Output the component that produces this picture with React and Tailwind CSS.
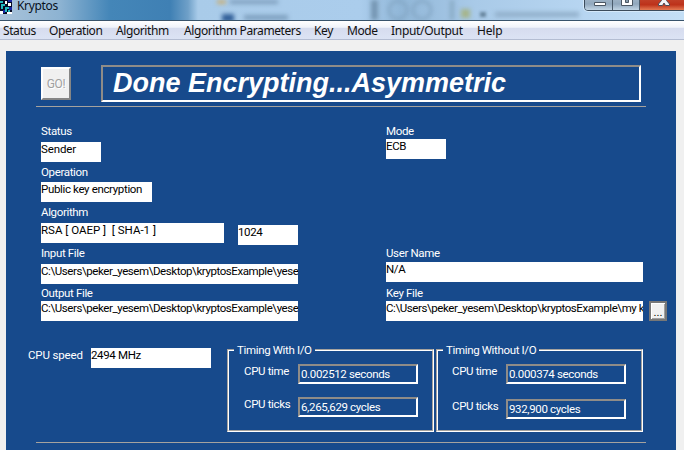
const sunken = "border-2 border-t-[#8f8c88] border-l-[#8f8c88] border-b-white border-r-white";

function Label({ children, className = "" }) {
  return <div className={`h-[14px] whitespace-nowrap leading-[14px] text-white ${className}`}>{children}</div>;
}

function Field({ children, className = "" }) {
  return (
    <div className={`h-5 overflow-hidden whitespace-nowrap bg-white leading-[15px] text-black ${className}`}>
      {children}
    </div>
  );
}

function Timing({ title, time, ticks, titleClass, labelClass, rowClass }) {
  return (
    <div className="flex h-[83px] w-[207px] flex-col border border-white border-t-[#a5a29e] border-l-[#a5a29e]">
      <div className="flex h-[81px] flex-col border border-t-white border-l-white border-b-[#a5a29e] border-r-[#a5a29e]">
        <div className={`-mt-2 h-[14px] self-start whitespace-nowrap bg-[#174a8c] px-[3px] leading-[14px] text-white ${titleClass}`}>{title}</div>
        <div className="mt-[7px] flex pr-[14px]">
          <Label className={`w-[54px] ${labelClass}`}>CPU time</Label>
          <div className={`h-5 w-[120px] whitespace-nowrap pl-px leading-[17px] text-white ${sunken}`}>{time}</div>
        </div>
        <div className={`flex ${rowClass}`}>
          <Label className={`w-[54px] ${labelClass}`}>CPU ticks</Label>
          <div className={`h-5 w-[120px] whitespace-nowrap pl-px leading-[17px] text-white ${sunken}`}>{ticks}</div>
        </div>
      </div>
    </div>
  );
}

function TitleBar() {
  return (
    <header className="relative flex h-[21px] overflow-hidden border-b border-[#38536b] bg-[linear-gradient(90deg,#a9c3da_0px,#8db3d2_60px,#4486b8_110px,#3f80b4_170px,#6fa0c8_188px,#a9cbe9_198px,#abcdec_360px,#91b7d8_400px,#a9cae8_475px,#b9d7f2_600px,#c4dff6_684px)]">
      <div className="absolute left-[230px] top-0 h-1 w-[48px] bg-[#7f9fbd] blur-[2px]" />
      <div className="absolute left-[217px] top-0 h-1 w-[9px] bg-[#c9b078] blur-[2px]" />
      <div className="absolute left-[222px] top-[14px] h-2 w-3 bg-[#315f98] blur-[2px]" />
      <div className="absolute left-[244px] top-[15px] h-[5px] w-11 bg-[#7d9fbe] blur-[2px]" />
      <div className="absolute left-[371px] top-0 h-5 w-[7px] bg-[#7596b2] blur-[2px]" />
      <div className="absolute left-[388px] top-0 size-5 rounded-full border-2 border-[#7d9fbc] blur-[2px]" />
      <div className="absolute left-[412px] top-0 size-5 rounded-full border-2 border-[#7d9fbc] blur-[2px]" />
      <div className="absolute left-[450px] top-0 h-5 w-1 bg-[#88a9c4] blur-[2px]" />
      <div className="absolute left-[461px] top-[9px] h-[9px] w-[9px] bg-[#a6b58c] blur-[2px]" />
      <div className="absolute left-[480px] top-[12px] h-[5px] w-[6px] bg-[#68869f] blur-[1.5px]" />
      <div className="absolute left-[495px] top-[12px] h-[5px] w-[84px] bg-[#91afca] blur-[2px]" />
      <svg className="relative h-[14px] w-3" viewBox="0 0 12 14" shapeRendering="crispEdges">
        <path fill="#050b24" d="M0 0h12v14H0z" />
        <path fill="#23b9bf" d="M0 1h3v2H0zM1 4h4v2H3v3H1zM5 7h4v2H7v3H5zM8 10h2v2H8z" />
        <path fill="#fff" d="M5 1h2v3H5zM8 3h3v3H8zM0 11h3v3H0zM7 12h5v2H7z" />
        <path fill="#1525a0" d="M8 0h4v2H8zM9 7h3v3H9zM3 10h2v3H3z" />
      </svg>
      <div className="relative ml-[5px] -mt-px h-4 font-['Noto_Sans',sans-serif] text-[12px] leading-[14px] text-[#07111d] tracking-[-0.35px]">Kryptos</div>
      <div className="absolute right-[-3px] top-[-6px] flex h-[17px] w-[103px] overflow-hidden rounded-b-[4px] border border-[#3b4b5b] shadow-[0_0_0_1px_#d5e9fa]">
        <div className="w-[28px] border-r border-[#4a5b6b] bg-[linear-gradient(#a9bccd,#91a8bd_60%,#c1d5e4)]" />
        <div className="w-[27px] border-r border-[#4a5b6b] bg-[linear-gradient(#a9bccd,#91a8bd_60%,#c1d5e4)]" />
        <div className="flex-1 bg-[linear-gradient(#c44c35,#bd321a_65%,#e57b54)]" />
        <svg className="absolute inset-0 size-full" viewBox="0 0 101 15">
          <path d="M9.5 7.5h11v3h-11z" fill="#fff" stroke="#4b5662" />
          <path d="M36.5 1.5h11v9h-11z" fill="#fff" stroke="#4b5662" />
          <path d="M40.5 4.5h3v3h-3z" fill="#8499aa" stroke="#4b5662" />
          <path d="M73.5 10.500v-1.500l3-3.500-3-4h4l1.500 2 1.500-2h4l-3 4 3 3.500v1.500h-4l-1.500-2.500-1.500 2.500z" fill="#f4f4f6" stroke="#4b4a55" />
        </svg>
      </div>
    </header>
  );
}

export default function App() {
  return (
    <main className="h-[450px] w-[684px] overflow-hidden bg-[#f0f0f0] font-[Roboto,'Liberation_Sans',sans-serif] text-[11.5px] tracking-[-0.35px]">
      <TitleBar />
      <nav className="flex h-[19px] whitespace-nowrap border-b border-[#b4bdd2] bg-[linear-gradient(#fff_0,#f0f3fa_35%,#d6dcee_40%,#dce3f4_100%)] pl-[3px] font-['Noto_Sans',sans-serif] text-[12px] leading-[20px] text-[#111] tracking-[-0.4px]">
        <span className="w-[46px]">Status</span>
        <span className="w-[67px]">Operation</span>
        <span className="w-[68px]">Algorithm</span>
        <span className="w-[130px]">Algorithm Parameters</span>
        <span className="w-[33px]">Key</span>
        <span className="w-[44px]">Mode</span>
        <span className="w-[86px] tracking-[-0.3px]">Input/Output</span>
        <span className="tracking-[-0.2px]">Help</span>
      </nav>

      <section className="ml-[6px] mt-[11px] flex h-[399px] w-[670px] flex-col bg-[#174a8c]">
        <div className="flex pl-[35px] pt-[14px]">
          <button className="mt-[2px] h-[33px] w-[30px] border-2 border-t-white border-l-white border-b-[#858585] border-r-[#858585] bg-[#f0f0f0] text-[12px] text-[#a0a0a0] [text-shadow:1px_1px_#fff]">GO!</button>
          <div className={`ml-[30px] h-[37px] w-[540px] whitespace-nowrap pl-[10px] font-['Liberation_Sans',Arial,sans-serif] text-[27px] font-bold italic leading-[33px] tracking-normal text-white ${sunken}`}>Done Encrypting...Asymmetric</div>
        </div>
        <div className="ml-[30px] mt-1 h-px w-[610px] bg-[#a5a29e]" />

        <div className="mt-[17px] flex h-[197px] pl-[35px]">
          <div className="w-[345px]">
            <Label>Status</Label>
            <Field className="mt-1 w-[60px] tracking-[-0.1px]">Sender</Field>
            <Label className="mt-[3px]">Operation</Label>
            <Field className="mt-[3px] w-[111px]">Public key encryption</Field>
            <Label className="mt-[3px]">Algorithm</Label>
            <div className="mt-1 flex h-5 gap-[14px]">
              <Field className="w-[183px] whitespace-pre tracking-normal">{"RSA [ OAEP ]  [ SHA-1 ]"}</Field>
              <Field className="mt-[2px] w-[60px]">1024</Field>
            </div>
            <Label className="mt-[3px]">Input File</Label>
            <Field className="mt-1 w-[257px] tracking-[-0.42px]">C:\Users\peker_yesem\Desktop\kryptosExample\yese</Field>
            <Label className="mt-[2px]">Output File</Label>
            <Field className="mt-px w-[257px] tracking-[-0.42px]">C:\Users\peker_yesem\Desktop\kryptosExample\yese</Field>
          </div>
          <div className="w-[281px]">
            <Label>Mode</Label>
            <Field className="mt-px w-[60px]">ECB</Field>
            <Label className="mt-[87px]">User Name</Label>
            <Field className="mt-[2px] w-[257px]">N/A</Field>
            <Label className="mt-1">Key File</Label>
            <div className="mt-px flex gap-[6px]">
              <Field className="w-[257px] tracking-[-0.42px]">C:\Users\peker_yesem\Desktop\kryptosExample\my k</Field>
              <button className="h-5 w-[18px] border-2 border-[#777] bg-[#f0f0f0] pt-px leading-3 tracking-normal text-black shadow-[inset_1px_1px_#fff,inset_-1px_-1px_#a0a0a0]">...</button>
            </div>
          </div>
        </div>

        <div className="mt-[28px] flex h-[83px] pl-[22px]">
          <Label className="mt-[-1px] w-[63px] tracking-[-0.15px]">CPU speed</Label>
          <Field className="mt-[-1px] w-[120px]">2494 MHz</Field>
          <div className="ml-4 flex gap-[2px]">
            <Timing title="Timing With I/O" time="0.002512 seconds" ticks="6,265,629 cycles" titleClass="ml-[5px]" labelClass="ml-[15px]" rowClass="mt-[13px]" />
            <Timing title="Timing Without I/O" time="0.000374 seconds" ticks="932,900 cycles" titleClass="ml-[5px]" labelClass="ml-[14px]" rowClass="mt-[15px]" />
          </div>
        </div>
        <div className="ml-[30px] mt-[10px] h-px w-[610px] bg-[#a5a29e]" />
      </section>
    </main>
  );
}
